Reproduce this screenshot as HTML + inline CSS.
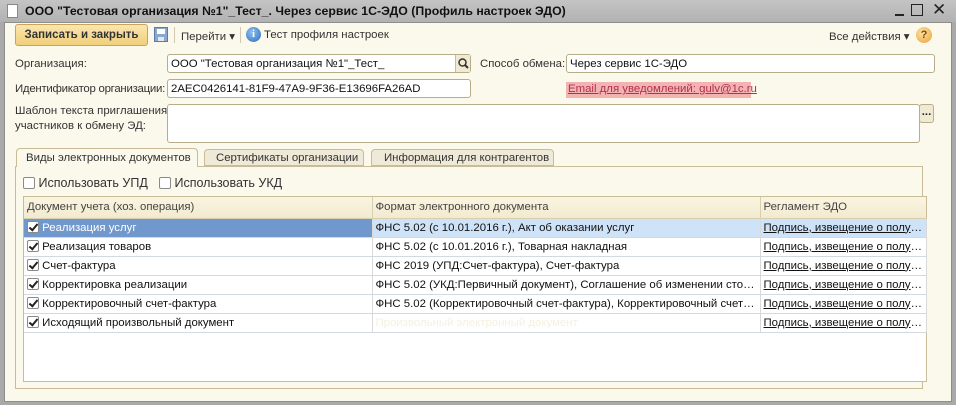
<!DOCTYPE html>
<html><head><meta charset="utf-8">
<style>
*{box-sizing:border-box;margin:0;padding:0}
body{width:956px;height:405px;overflow:hidden;background:#a9a9a9;font-family:"Liberation Sans","Noto Sans CJK SC",sans-serif;font-size:11.4px;color:#222;position:relative}
.a{position:absolute}
#title{left:0;top:0;width:956px;height:22px;background:linear-gradient(#c4c4c4,#b2b2b2);}
#title .t{left:25px;top:4px;font-weight:bold;font-size:12.3px;color:#111;white-space:nowrap}
#win{left:4px;top:22px;width:948px;height:380px;background:#fbf8ec;border:1px solid #8e8e8e}
.inp{position:absolute;background:#fff;border:1px solid #b8ad8a;border-radius:3px;height:19px;padding:3px 3px 0;white-space:nowrap;overflow:hidden;color:#111}
.lbl{position:absolute;color:#333;white-space:nowrap}
.cb{display:inline-block;width:12px;height:12px;border:1px solid #8a8a8a;border-radius:2px;background:#fff;vertical-align:-2px;position:relative}
.ck:after{content:"";position:absolute;left:3px;top:0px;width:3px;height:7px;border:solid #222;border-width:0 2px 2px 0;transform:rotate(40deg)}
table{border-collapse:collapse;table-layout:fixed}
td{height:19px;border-bottom:1px solid #d2d9e0;border-right:1px solid #d9d9d9;padding:0 3px;white-space:nowrap;overflow:hidden;text-overflow:ellipsis;color:#111}
td.l{text-decoration:underline;color:#111}
.tab{position:absolute;white-space:nowrap;color:#333}
</style></head><body>
<div id="title" class="a">
 <div class="a" style="left:7px;top:4px;width:11px;height:14px;background:#fff;border:1px solid #888"></div>
 <div class="a t">ООО "Тестовая организация №1"_Тест_. Через сервис 1С-ЭДО (Профиль настроек ЭДО)</div>
 <div class="a" style="left:895px;top:14px;width:9px;height:2px;background:#222"></div>
 <div class="a" style="left:911px;top:4px;width:12px;height:12px;border:1.5px solid #222"></div>
 <div class="a" style="left:932px;top:0px;font-size:17px;color:#222">✕</div>
</div>
<div id="win" class="a"></div>
<div class="a" style="left:15px;top:24px;width:133px;height:22px;border:1px solid #c9a35a;border-radius:3px;background:linear-gradient(#fbe6b0,#f0cf7a);font-weight:bold;color:#333;text-align:center;line-height:20px;font-size:11.5px">Записать и закрыть</div>
<div class="a" style="left:154px;top:27px;width:14px;height:15px;background:#8aa8d0;border:1px solid #5a7aa8"><div class="a" style="left:2px;top:1px;width:8px;height:5px;background:#fff"></div><div class="a" style="left:3px;top:9px;width:6px;height:4px;background:#dfe8f3"></div></div>
<div class="a" style="left:174px;top:27px;width:1px;height:16px;background:#d0c8b0"></div>
<div class="lbl" style="left:181px;top:29px">Перейти ▾</div>
<div class="a" style="left:240px;top:27px;width:1px;height:16px;background:#d0c8b0"></div>
<div class="a" style="left:246px;top:27px;width:15px;height:15px;border-radius:50%;background:radial-gradient(circle at 40% 35%,#8fc0f0,#2b6cc0);color:#fff;font-weight:bold;font-size:10px;text-align:center;line-height:15px;font-family:'Liberation Serif',serif">i</div>
<div class="lbl" style="left:264px;top:29px">Тест профиля настроек</div>
<div class="lbl" style="left:829px;top:29px">Все действия ▾</div>
<div class="a" style="left:916px;top:27px;width:16px;height:16px;border-radius:50%;background:radial-gradient(circle at 40% 35%,#fde2a0,#e8a23a);color:#7a4a10;font-weight:bold;font-size:11px;text-align:center;line-height:16px">?</div>

<div class="lbl" style="left:15px;top:58px">Организация:</div>
<div class="inp" style="left:167px;top:54px;width:304px">ООО "Тестовая организация №1"_Тест_</div>
<div class="a" style="left:455px;top:55px;width:15px;height:17px;background:#f1ead2;border-left:1px solid #c8bd98;text-align:center">
<svg width="13" height="13" viewBox="0 0 13 13" style="margin-top:2px"><circle cx="5.5" cy="5.5" r="3.5" fill="none" stroke="#333" stroke-width="1.5"/><path d="M8 8 L11 11" stroke="#333" stroke-width="2"/></svg></div>
<div class="lbl" style="left:480px;top:58px">Способ обмена:</div>
<div class="inp" style="left:566px;top:54px;width:369px">Через сервис 1С-ЭДО</div>

<div class="lbl" style="left:15px;top:83px;letter-spacing:-0.25px">Идентификатор организации:</div>
<div class="inp" style="left:167px;top:79px;width:304px">2AEC0426141-81F9-47A9-9F36-E13696FA26AD</div>
<div class="a" style="left:566px;top:82px;width:185px;height:16px;background:#f4b3b3;color:#b03050;text-decoration:underline;padding:1px 2px;white-space:nowrap">Email для уведомлений: gulv@1c.ru</div>

<div class="lbl" style="left:15px;top:104px;line-height:15px">Шаблон текста приглашения<br>участников к обмену ЭД:</div>
<div class="inp" style="left:167px;top:104px;width:753px;height:39px"></div>
<div class="a" style="left:919px;top:104px;width:15px;height:19px;border:1px solid #b8ad8a;border-radius:3px;background:#f1ead2;text-align:center;font-weight:bold;line-height:14px">...</div>

<div class="a" style="left:15px;top:166px;width:908px;height:223px;border:1px solid #c8bd98"></div>
<div class="tab" style="left:16px;top:148px;width:182px;height:19px;border:1px solid #c8bd98;border-bottom:none;border-radius:4px 4px 0 0;background:#fbf8ec;padding:3px 9px">Виды электронных документов</div>
<div class="tab" style="left:204px;top:149px;width:160px;height:17px;border:1px solid #c8bd98;border-radius:4px 4px 0 0;background:#efe9d8;padding:2px 11px">Сертификаты организации</div>
<div class="tab" style="left:371px;top:149px;width:183px;height:17px;border:1px solid #c8bd98;border-radius:4px 4px 0 0;background:#efe9d8;padding:2px 12px">Информация для контрагентов</div>

<div class="lbl" style="left:23px;top:176px;font-size:12.5px"><span class="cb"></span> Использовать УПД</div>
<div class="lbl" style="left:159px;top:176px;font-size:12.5px"><span class="cb"></span> Использовать УКД</div>

<div class="a" style="left:23px;top:196px;width:904px;height:186px;border:1px solid #c8bd98;background:#fff"></div>
<table class="a" style="left:24px;top:197px;width:902px">
<colgroup><col style="width:348px"><col style="width:388px"><col style="width:166px"></colgroup>
<tr style="background:linear-gradient(#fbf5e0,#f2ead0)"><td style="height:21px;color:#444;border-bottom:1px solid #d8cfb0;border-right-color:#d8cfb0">Документ учета (хоз. операция)</td><td style="color:#444;border-bottom:1px solid #d8cfb0;border-right-color:#d8cfb0">Формат электронного документа</td><td style="color:#444;border-bottom:1px solid #d8cfb0;border-right:none">Регламент ЭДО</td></tr>
<tr><td style="background:#7198cc;color:#fff"><span class="cb ck"></span> Реализация услуг</td><td style="background:#cfe3f8">ФНС 5.02 (с 10.01.2016 г.), Акт об оказании услуг</td><td class="l" style="background:#cfe3f8">Подпись, извещение о получении</td></tr>
<tr><td><span class="cb ck"></span> Реализация товаров</td><td>ФНС 5.02 (с 10.01.2016 г.), Товарная накладная</td><td class="l">Подпись, извещение о получении</td></tr>
<tr><td><span class="cb ck"></span> Счет-фактура</td><td>ФНС 2019 (УПД:Счет-фактура), Счет-фактура</td><td class="l">Подпись, извещение о получении</td></tr>
<tr><td><span class="cb ck"></span> Корректировка реализации</td><td>ФНС 5.02 (УКД:Первичный документ), Соглашение об изменении стоимости</td><td class="l">Подпись, извещение о получении</td></tr>
<tr><td><span class="cb ck"></span> Корректировочный счет-фактура</td><td>ФНС 5.02 (Корректировочный счет-фактура), Корректировочный счет-фактура</td><td class="l">Подпись, извещение о получении</td></tr>
<tr><td><span class="cb ck"></span> Исходящий произвольный документ</td><td style="color:#f6f0e0">Произвольный электронный документ</td><td class="l">Подпись, извещение о получении</td></tr>
</table>
</body></html>
